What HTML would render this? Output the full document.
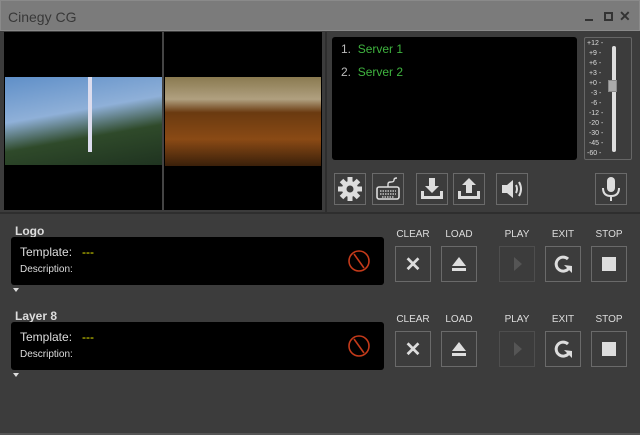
<!DOCTYPE html><html><head><style>
*{margin:0;padding:0;box-sizing:border-box}
body{width:640px;height:435px;background:#3c3c3c;font-family:"Liberation Sans",sans-serif;position:relative;overflow:hidden;color:#ddd}
.a{position:absolute}
.title{left:0;top:0;width:640px;height:31px;background:#7b7b7b;border:1px solid #8a8a8a}
.btn{position:absolute;border:1px solid #6a6a6a;background:#3c3c3c}
.lbl{position:absolute;font-size:10px;color:#ddd;text-align:center;width:40px}
.box{position:absolute;background:#000;border-radius:3px}
</style></head><body>
<div class="a title"><span class="a" style="left:7px;top:8px;font-size:14px;color:#383838">Cinegy CG</span>
<span class="a" style="left:584px;top:18px;width:8px;height:2px;background:#333"></span>
<span class="a" style="left:603px;top:11px;width:9px;height:9px;border:2px solid #333"></span>
<span class="a" style="left:618px;top:7px;font-size:14px;font-weight:bold;color:#333">✕</span></div>
<div class="a" style="left:4px;top:32px;width:318px;height:178px;background:#000"></div>
<div class="a" style="left:162px;top:32px;width:2px;height:178px;background:#444"></div>
<div class="a" style="left:5px;top:77px;width:157px;height:88px;background:linear-gradient(170deg,#5f8fc8 0%,#8fb0d8 40%,#2f4a2a 65%,#1f3320 100%)"></div>
<div class="a" style="left:88px;top:77px;width:4px;height:75px;background:#dde"></div>
<div class="a" style="left:165px;top:77px;width:156px;height:89px;background:linear-gradient(180deg,#8a7a50 0%,#b0a080 25%,#6a3a10 40%,#8a4a15 70%,#3a200a 100%)"></div>
<div class="a" style="left:325px;top:32px;width:315px;height:181px;border-left:2px solid #2e2e2e"></div>
<div class="box" style="left:332px;top:37px;width:245px;height:123px">
<div class="a" style="left:9px;top:5px;font-size:12px;color:#bbb">1.&nbsp;&nbsp;<span style="color:#3fb33f">Server 1</span></div>
<div class="a" style="left:9px;top:28px;font-size:12px;color:#bbb">2.&nbsp;&nbsp;<span style="color:#3fb33f">Server 2</span></div></div>
<div class="a" style="left:584px;top:37px;width:48px;height:123px;border:1px solid #666;border-radius:2px;font-size:7px;color:#ddd;line-height:10px;padding:1px 0 0 2px">
+12 -<br>&nbsp;+9 -<br>&nbsp;+6 -<br>&nbsp;+3 -<br>&nbsp;+0 -<br>&nbsp;&nbsp;-3 -<br>&nbsp;&nbsp;-6 -<br>&nbsp;-12 -<br>&nbsp;-20 -<br>&nbsp;-30 -<br>&nbsp;-45 -<br>-60 -</div>
<div class="a" style="left:612px;top:46px;width:4px;height:106px;background:#ddd;border-radius:2px"></div>
<div class="a" style="left:608px;top:80px;width:9px;height:12px;background:#aaa;border:1px solid #888"></div>
<div class="btn" style="left:334px;top:173px;width:32px;height:32px"><svg width="30" height="30"><g transform="translate(15 15)" fill="#ddd"><circle r="8"/><rect x="-2.5" y="-12" width="5" height="24"/><rect x="-2.5" y="-12" width="5" height="24" transform="rotate(45)"/><rect x="-2.5" y="-12" width="5" height="24" transform="rotate(90)"/><rect x="-2.5" y="-12" width="5" height="24" transform="rotate(135)"/><circle r="3.5" fill="#3c3c3c"/></g></svg></div>
<div class="btn" style="left:372px;top:173px;width:32px;height:32px"><svg width="30" height="30"><rect x="4" y="13" width="22" height="12" rx="2" stroke="#ddd" stroke-width="1.6" fill="none"/><path d="M7 17h16M7 20h16M9 23h12" stroke="#ddd" stroke-width="1.2" stroke-dasharray="1.5 1"/><path d="M15 13v-3q0-2 3-2t3-2 3-2" stroke="#ddd" stroke-width="1.4" fill="none"/></svg></div>
<div class="btn" style="left:416px;top:173px;width:32px;height:32px"><svg width="30" height="30"><path d="M12 4h6v8h4l-7 7-7-7h4z" fill="#ddd"/><path d="M4 17v8h22v-8h-3v5H7v-5z" fill="#ddd"/></svg></div>
<div class="btn" style="left:453px;top:173px;width:32px;height:32px"><svg width="30" height="30"><path d="M12 19h6v-8h4l-7-7-7 7h4z" fill="#ddd"/><path d="M4 17v8h22v-8h-3v5H7v-5z" fill="#ddd"/></svg></div>
<div class="btn" style="left:496px;top:173px;width:32px;height:32px"><svg width="30" height="30"><path d="M5 11h5l6-5v18l-6-5H5z" fill="#ddd"/><path d="M19 11q2 4 0 8M22 8q4 7 0 14" stroke="#ddd" stroke-width="2" fill="none"/></svg></div>
<div class="btn" style="left:595px;top:173px;width:32px;height:32px"><svg width="30" height="30"><rect x="11" y="3" width="8" height="15" rx="4" fill="#ddd"/><path d="M7 14q0 8 8 8t8-8M15 22v5" stroke="#ddd" stroke-width="2" fill="none"/></svg></div>
<div class="a" style="left:0;top:212px;width:640px;height:2px;background:#2e2e2e"></div>

<div id="L"></div>
<script>
function layer(y,name){var h='';
h+='<div class="a" style="left:15px;top:'+(y-13)+'px;font-size:12px;font-weight:bold;color:#ddd">'+name+'</div>';
h+='<div class="box" style="left:11px;top:'+y+'px;width:373px;height:48px"><div class="a" style="left:9px;top:8px;font-size:12px;color:#ddd">Template:&nbsp;&nbsp;&nbsp;<span style="color:#ee0">---</span></div><div class="a" style="left:9px;top:27px;font-size:10px;color:#ddd">Description:</div><svg class="a" style="left:335px;top:11px" width="26" height="26"><circle cx="13" cy="13" r="10" stroke="#c43a1a" stroke-width="1.6" fill="none"/><path d="M8 6l10 14" stroke="#c43a1a" stroke-width="1.6"/></svg></div>';
h+='<div class="a" style="left:13px;top:'+(y+51)+'px;width:0;height:0;border-left:3px solid transparent;border-right:3px solid transparent;border-top:4px solid #ddd"></div>';
var xs=[395,441,499,545,591],ls=['CLEAR','LOAD','PLAY','EXIT','STOP'];
for(var i=0;i<5;i++){h+='<div class="lbl" style="left:'+(xs[i]-2)+'px;top:'+(y-8)+'px">'+ls[i]+'</div>';
var ic=['<span style="font-size:20px;font-weight:bold;color:#ddd">✕</span>','<svg width="20" height="20"><path d="M10 3l7 9H3z M3 14h14v3H3z" fill="#ddd"/></svg>','<svg width="20" height="20"><path d="M7 3l8 7-8 7z" fill="#555"/></svg>','<svg width="22" height="22"><path d="M16 6a7 7 0 1 0 1 9" stroke="#ddd" stroke-width="3" fill="none"/><path d="M12 12l8 8v-7z" fill="#ddd"/></svg>','<div style="width:14px;height:14px;background:#ddd;margin:auto"></div>'][i];
h+='<div class="btn" style="left:'+xs[i]+'px;top:'+(y+9)+'px;width:36px;height:36px;display:flex;align-items:center;justify-content:center;'+(i==2?'border-color:#4e4e4e':'')+'">'+ic+'</div>';}
return h;}
document.getElementById('L').innerHTML=layer(237,'Logo')+layer(322,'Layer 8');
</script>
<div class="a" style="left:0;top:433px;width:640px;height:2px;background:#555"></div>
</body></html>
